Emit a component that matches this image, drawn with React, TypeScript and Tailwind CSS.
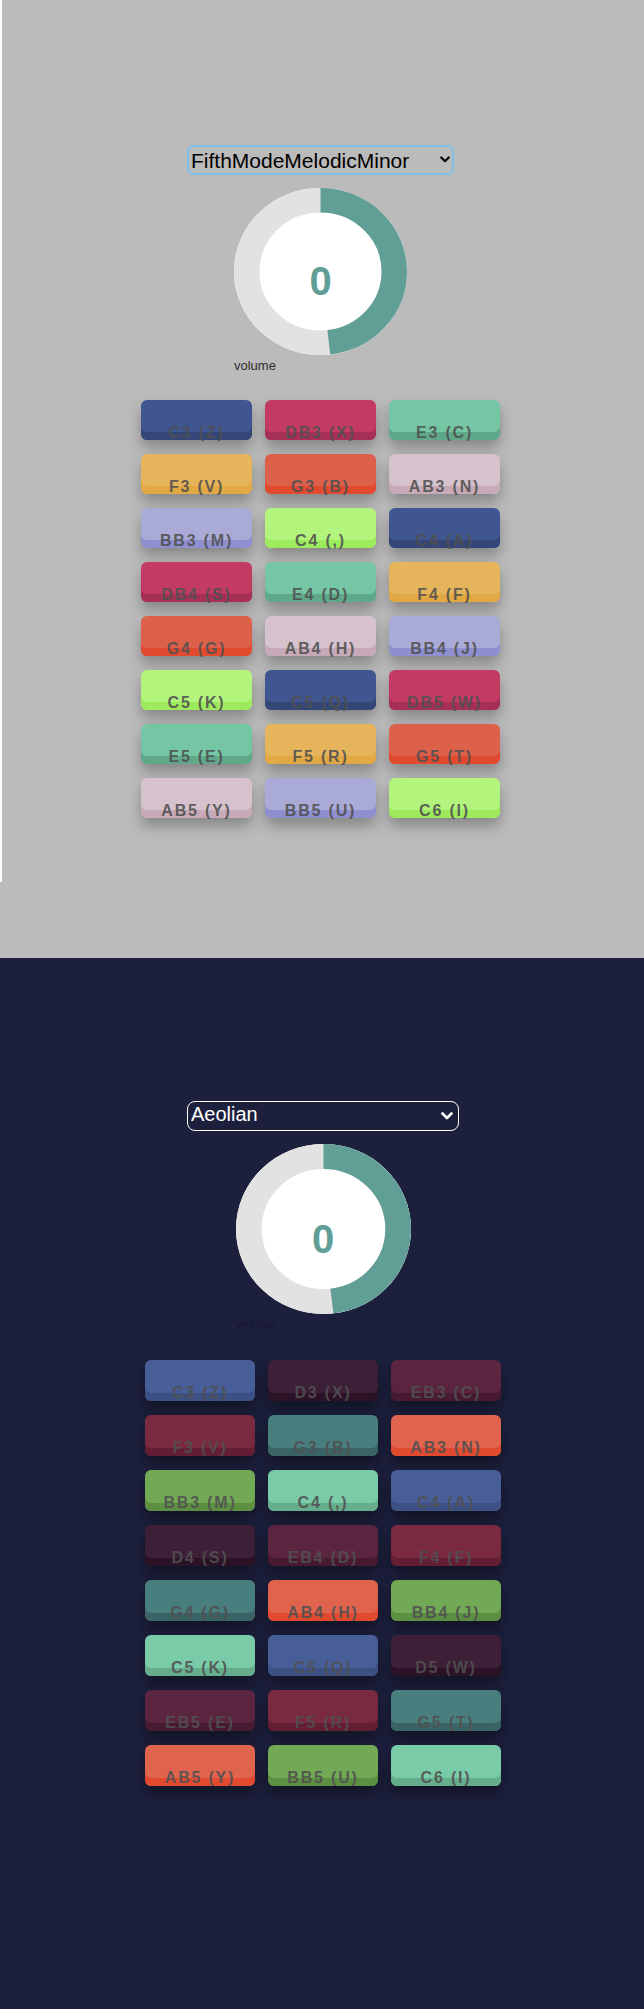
import React from "react";

type Key = { face: string; shadow: string };

const lightKeys: Key[] = [
  { face: "bg-[#3f5690]", shadow: "shadow-[inset_0_-8px_0_#344677,0_8px_14px_rgba(0,0,0,0.28)]" },
  { face: "bg-[#c33b63]", shadow: "shadow-[inset_0_-8px_0_#a62f55,0_8px_14px_rgba(0,0,0,0.28)]" },
  { face: "bg-[#74c6a5]", shadow: "shadow-[inset_0_-8px_0_#5fa98a,0_8px_14px_rgba(0,0,0,0.28)]" },
  { face: "bg-[#e6b55b]", shadow: "shadow-[inset_0_-8px_0_#e1a843,0_8px_14px_rgba(0,0,0,0.28)]" },
  { face: "bg-[#dd614a]", shadow: "shadow-[inset_0_-8px_0_#e14a2f,0_8px_14px_rgba(0,0,0,0.28)]" },
  { face: "bg-[#d5c2cc]", shadow: "shadow-[inset_0_-8px_0_#c7a9b8,0_8px_14px_rgba(0,0,0,0.28)]" },
  { face: "bg-[#aaaad7]", shadow: "shadow-[inset_0_-8px_0_#8f8fd0,0_8px_14px_rgba(0,0,0,0.28)]" },
  { face: "bg-[#b3f57c]", shadow: "shadow-[inset_0_-8px_0_#9eea5d,0_8px_14px_rgba(0,0,0,0.28)]" },
];

const darkKeys: Key[] = [
  { face: "bg-[#485e99]", shadow: "shadow-[inset_0_-8px_0_#3c5083,0_8px_14px_rgba(0,0,0,0.4)]" },
  { face: "bg-[#3d1f38]", shadow: "shadow-[inset_0_-8px_0_#2c1226,0_8px_14px_rgba(0,0,0,0.4)]" },
  { face: "bg-[#5b2540]", shadow: "shadow-[inset_0_-8px_0_#481a32,0_8px_14px_rgba(0,0,0,0.4)]" },
  { face: "bg-[#792a40]", shadow: "shadow-[inset_0_-8px_0_#631e33,0_8px_14px_rgba(0,0,0,0.4)]" },
  { face: "bg-[#497e7f]", shadow: "shadow-[inset_0_-8px_0_#3a6365,0_8px_14px_rgba(0,0,0,0.4)]" },
  { face: "bg-[#e0634d]", shadow: "shadow-[inset_0_-8px_0_#e24a30,0_8px_14px_rgba(0,0,0,0.4)]" },
  { face: "bg-[#71a955]", shadow: "shadow-[inset_0_-8px_0_#5d8f43,0_8px_14px_rgba(0,0,0,0.4)]" },
  { face: "bg-[#7acba8]", shadow: "shadow-[inset_0_-8px_0_#66ad8d,0_8px_14px_rgba(0,0,0,0.4)]" },
];

const lightNotes = [
  "C3 (Z)", "DB3 (X)", "E3 (C)", "F3 (V)", "G3 (B)", "AB3 (N)", "BB3 (M)", "C4 (,)",
  "C4 (A)", "DB4 (S)", "E4 (D)", "F4 (F)", "G4 (G)", "AB4 (H)", "BB4 (J)", "C5 (K)",
  "C5 (Q)", "DB5 (W)", "E5 (E)", "F5 (R)", "G5 (T)", "AB5 (Y)", "BB5 (U)", "C6 (I)",
];

const darkNotes = [
  "C3 (Z)", "D3 (X)", "EB3 (C)", "F3 (V)", "G3 (B)", "AB3 (N)", "BB3 (M)", "C4 (,)",
  "C4 (A)", "D4 (S)", "EB4 (D)", "F4 (F)", "G4 (G)", "AB4 (H)", "BB4 (J)", "C5 (K)",
  "C5 (Q)", "D5 (W)", "EB5 (E)", "F5 (R)", "G5 (T)", "AB5 (Y)", "BB5 (U)", "C6 (I)",
];

const Chevron = ({ className }: { className: string }) => (
  <svg viewBox="0 0 12 8" className={className} fill="none">
    <path d="M1.5 1.5 L6 6 L10.5 1.5" stroke="currentColor" strokeWidth="2.6" strokeLinecap="round" strokeLinejoin="round" />
  </svg>
);

// ring drawn in a 100x100 box, stretched to the wrapper size
const Donut = ({ size }: { size: string }) => {
  const r = 42.65;
  const c = 2 * Math.PI * r;
  return (
    <div className={`relative ${size}`}>
      <svg viewBox="0 0 100 100" preserveAspectRatio="none" className="w-full h-full">
        <circle cx="50" cy="50" r="50" fill="#ffffff" />
        <circle cx="50" cy="50" r={r} fill="none" stroke="#e2e2e2" strokeWidth="14.7" />
        <circle
          cx="50"
          cy="50"
          r={r}
          fill="none"
          stroke="#619e96"
          strokeWidth="14.7"
          strokeDasharray={`${c * 0.481} ${c}`}
          transform="rotate(-90 50 50)"
        />
      </svg>
      <div className="absolute inset-0 flex items-center justify-center pt-[19px]">
        <span className="text-[40px] leading-none font-bold text-[#619e96]">0</span>
      </div>
    </div>
  );
};

const Keyboard = ({ notes, keys, dark }: { notes: string[]; keys: Key[]; dark?: boolean }) => (
  <div
    className={
      dark
        ? "grid grid-cols-[repeat(3,110px)] gap-x-[13px] gap-y-[14px]"
        : "grid grid-cols-[repeat(3,111px)] gap-x-[13px] gap-y-[14px]"
    }
  >
    {notes.map((note, idx) => {
      const k = keys[idx % keys.length];
      return (
        <button
          key={note + idx}
          className={`${dark ? "h-[41px]" : "h-[40px]"} rounded-[6px] ${k.face} ${k.shadow} pt-[24px] text-center text-[16px] leading-[17px] font-bold tracking-[1.8px] text-[#505050]/90 whitespace-nowrap`}
        >
          {note}
        </button>
      );
    })}
  </div>
);

export default function App() {
  return (
    <div className="font-['Liberation_Sans',Arial,sans-serif]">
      {/* light theme */}
      <div className="h-[958px] bg-[#bbbbbb]">
        <div className="h-[882px] border-l-2 border-white pr-[5px] pt-[145px] flex flex-col items-center">
          <div className="relative w-[267px] h-[30px]">
            <select className="appearance-none w-full h-full rounded-[6px] border-2 border-[#7dbfea] bg-transparent pl-[2px] text-[21px] leading-none text-black outline-none">
              <option>FifthModeMelodicMinor</option>
            </select>
            <Chevron className="absolute right-[4px] top-[11px] w-[10px] h-[7px] text-black pointer-events-none" />
          </div>
          <div className="mt-[13px] flex flex-col items-start">
            <Donut size="w-[173px] h-[167px]" />
            <span className="mt-[3px] text-[13px] leading-[16px] font-medium text-[#2d2d2d]">volume</span>
          </div>
          <div className="mt-[26px]">
            <Keyboard notes={lightNotes} keys={lightKeys} />
          </div>
        </div>
      </div>

      {/* dark theme */}
      <div className="h-[1051px] bg-[#1d203d] pl-[2px] pt-[143px] flex flex-col items-center">
        <div className="relative w-[272px] h-[30px]">
          <select className="appearance-none w-full h-full rounded-[8px] border-[1.5px] border-white bg-transparent pl-[3px] pb-[4px] text-[20px] leading-none text-white outline-none">
            <option>Aeolian</option>
          </select>
          <Chevron className="absolute right-[6px] top-[11px] w-[12px] h-[8px] text-white pointer-events-none" />
        </div>
        <div className="mt-[13px] flex flex-col items-start">
          <Donut size="w-[175px] h-[170px]" />
          <span className="mt-[3px] text-[13px] leading-[16px] font-medium text-[#15172e]">volume</span>
        </div>
        <div className="mt-[27px]">
          <Keyboard notes={darkNotes} keys={darkKeys} dark />
        </div>
      </div>
    </div>
  );
}
